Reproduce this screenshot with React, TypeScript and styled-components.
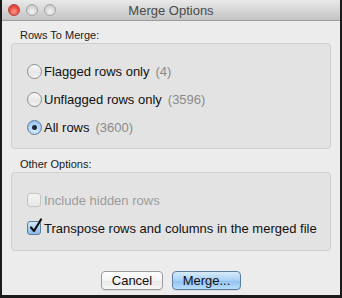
import React, { FC } from "react";
import styled, { createGlobalStyle } from "styled-components";

const GlobalStyle = createGlobalStyle`
  html, body {
    margin: 0;
    padding: 0;
    background: #1b1b1b;
  }
  body {
    font-family: "Liberation Sans", Arial, sans-serif;
  }
`;

const Window = styled.div`
  width: 342px;
  height: 298px;
  box-sizing: border-box;
  border-left: 2px solid #1b1b1b;
  border-right: 2px solid #1b1b1b;
  border-bottom: 3px solid #1b1b1b;
  background: #ececec;
  display: flex;
  flex-direction: column;
  overflow: hidden;
`;

const TitleBar = styled.div`
  height: 21px;
  box-sizing: border-box;
  border-bottom: 1px solid #9c9c9c;
  background: linear-gradient(#e9e9e9, #d2d2d2 60%, #c4c4c4);
  position: relative;
  display: flex;
  align-items: center;
  justify-content: center;
  font-size: 13px;
  color: #4a4a4a;
`;

const Lights = styled.div`
  position: absolute;
  left: 6px;
  top: 4px;
  display: flex;
  gap: 6px;
`;

const Light = styled.div<{ $red?: boolean }>`
  width: 12px;
  height: 12px;
  border-radius: 50%;
  box-sizing: border-box;
  border: 1px solid ${(p) => (p.$red ? "#b8413c" : "#a5a5a5")};
  background: ${(p) =>
    p.$red
      ? "radial-gradient(circle at 50% 65%, #ff9c8f, #ec4d44 55%, #c93b35)"
      : "radial-gradient(circle at 50% 65%, #f4f4f4, #d4d4d4 60%, #bdbdbd)"};
`;

const Content = styled.div`
  flex: 1;
  padding: 7px 9px 0;
  display: flex;
  flex-direction: column;
`;

const SectionLabel = styled.div<{ $top?: number }>`
  font-size: 11px;
  line-height: 14px;
  color: #1a1a1a;
  padding-left: 9px;
  margin-top: ${(p) => p.$top ?? 0}px;
  margin-bottom: 1px;
`;

const GroupBox = styled.div<{ $height: number }>`
  height: ${(p) => p.$height}px;
  box-sizing: border-box;
  background: #e3e3e3;
  border: 1px solid #cfcfcf;
  border-radius: 4px;
  padding: 19px 0 0 15px;
  display: flex;
  flex-direction: column;
  gap: 12px;
`;

const Row = styled.div<{ $disabled?: boolean }>`
  height: 16px;
  display: flex;
  align-items: center;
  gap: 2px;
  font-size: 13px;
  color: ${(p) => (p.$disabled ? "#9b9b9b" : "#111")};
  white-space: nowrap;
`;

const Count = styled.span`
  color: #8a8a8a;
  margin-left: 4px;
`;

const RadioCircle = styled.div<{ $on?: boolean }>`
  width: 15px;
  height: 15px;
  border-radius: 50%;
  box-sizing: border-box;
  border: 1px solid ${(p) => (p.$on ? "#5f7d9c" : "#8d8d8d")};
  background: ${(p) =>
    p.$on
      ? "radial-gradient(circle at 50% 70%, #d9ecfc, #a9cff1 60%, #7fb0e0)"
      : "linear-gradient(#f9f9f9, #e6e6e6 60%, #f4f4f4)"};
  display: flex;
  align-items: center;
  justify-content: center;
  &::after {
    content: "";
    display: ${(p) => (p.$on ? "block" : "none")};
    width: 5px;
    height: 5px;
    border-radius: 50%;
    background: #1d2a3a;
  }
`;

const Box = styled.div<{ $on?: boolean; $disabled?: boolean }>`
  width: 14px;
  height: 14px;
  border-radius: 3px;
  box-sizing: border-box;
  position: relative;
  border: 1px solid
    ${(p) => (p.$on ? "#5f7d9c" : p.$disabled ? "#c4c4c4" : "#8d8d8d")};
  background: ${(p) =>
    p.$on
      ? "linear-gradient(#d3e8fb, #a3cbf0 60%, #8cbbe8)"
      : p.$disabled
      ? "linear-gradient(#f2f2f2, #e8e8e8)"
      : "linear-gradient(#fafafa, #e8e8e8)"};
  margin-right: 1px;
`;

const CheckMark = styled.svg`
  position: absolute;
  left: 1px;
  top: -4px;
`;

const ButtonBar = styled.div`
  margin-top: 20px;
  display: flex;
  justify-content: center;
  gap: 9px;
`;

const Button = styled.button<{ $primary?: boolean; $w: number }>`
  width: ${(p) => p.$w}px;
  height: 19px;
  padding: 0;
  box-sizing: border-box;
  font-family: "Liberation Sans", Arial, sans-serif;
  font-size: 13px;
  color: #111;
  border-radius: 4px;
  border: 1px solid ${(p) => (p.$primary ? "#5b7ea4" : "#9a9a9a")};
  background: ${(p) =>
    p.$primary
      ? "linear-gradient(#d7ebfc, #a8d0f4 50%, #8fc1f0 51%, #b9defc)"
      : "linear-gradient(#ffffff, #f3f3f3 50%, #e9e9e9 51%, #f7f7f7)"};
  box-shadow: 0 1px 0 rgba(0, 0, 0, 0.08);
`;

const Radio: FC<{ on?: boolean; label: string; count: string }> = ({
  on,
  label,
  count,
}) => (
  <Row>
    <RadioCircle $on={on} />
    {label}
    <Count>{count}</Count>
  </Row>
);

const Check: FC<{ on?: boolean; disabled?: boolean; label: string }> = ({
  on,
  disabled,
  label,
}) => (
  <Row $disabled={disabled}>
    <Box $on={on} $disabled={disabled}>
      {on && (
        <CheckMark width="14" height="16" viewBox="0 0 14 16">
          <path
            d="M2 9.5 L5 13 L12 1.5"
            fill="none"
            stroke="#111"
            strokeWidth="2.2"
            strokeLinecap="round"
            strokeLinejoin="round"
          />
        </CheckMark>
      )}
    </Box>
    {label}
  </Row>
);

const App = () => {
  return (
    <>
      <GlobalStyle />
      <Window>
        <TitleBar>
          <Lights>
            <Light $red />
            <Light />
            <Light />
          </Lights>
          Merge Options
        </TitleBar>
        <Content>
          <SectionLabel>Rows To Merge:</SectionLabel>
          <GroupBox $height={106}>
            <Radio label="Flagged rows only" count="(4)" />
            <Radio label="Unflagged rows only" count="(3596)" />
            <Radio on label="All rows" count="(3600)" />
          </GroupBox>
          <SectionLabel $top={8}>Other Options:</SectionLabel>
          <GroupBox $height={79}>
            <Check disabled label="Include hidden rows" />
            <Check on label="Transpose rows and columns in the merged file" />
          </GroupBox>
          <ButtonBar>
            <Button $w={62}>Cancel</Button>
            <Button $primary $w={69}>
              Merge...
            </Button>
          </ButtonBar>
        </Content>
      </Window>
    </>
  );
};

export default App;
